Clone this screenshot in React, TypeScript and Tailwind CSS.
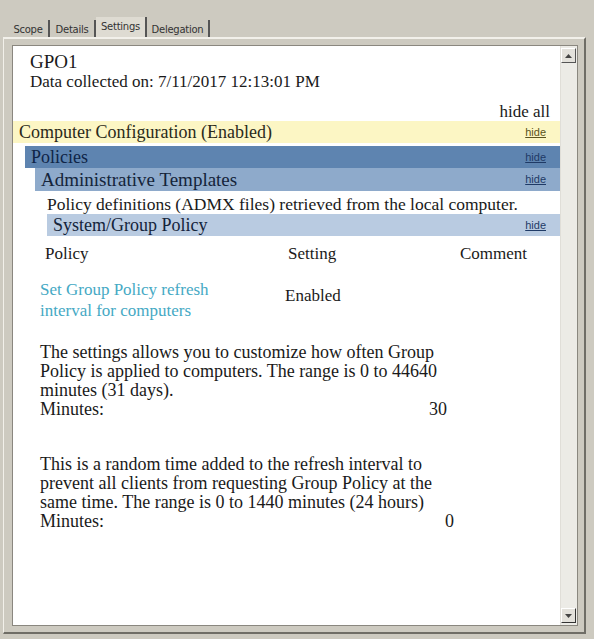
import React from 'react';

const serif = { fontFamily: '"Liberation Serif", "Times New Roman", serif' };

function HideLink({ className = '' }: { className?: string }) {
  return (
    <span
      className={`text-[11px] underline ${className}`}
      style={{ fontFamily: '"Liberation Sans", Arial, sans-serif' }}
    >
      hide
    </span>
  );
}

function SectionBar({
  title,
  size,
  bg,
  text,
}: {
  title: string;
  size: string;
  bg: string;
  text: string;
}) {
  return (
    <div className={`flex items-center justify-between pl-[6px] pr-[14px] ${size} ${bg}`}>
      <span className={`text-[18px] leading-none ${text}`}>{title}</span>
      <HideLink className="text-[#1f3a66]" />
    </div>
  );
}

export default function App() {
  const tabs = [
    { t: 'Scope', w: 'w-[42px]' },
    { t: 'Details', w: 'w-[46px]' },
    { t: 'Settings', w: 'w-[51px]' },
    { t: 'Delegation', w: 'w-[63px]' },
  ];

  return (
    <div className="w-[594px] h-[639px] bg-[#cdcac0] overflow-hidden relative">
      {/* tab strip */}
      <div className="flex items-end h-[38px] pl-[8px]">
        {tabs.map(({ t, w }) => {
          const active = t === 'Settings';
          return (
            <div
              key={t}
              className={`flex items-center justify-center ${w} border-r-2 border-[#555] text-[10px] tracking-tight text-[#333] ${
                active ? 'h-[21px] bg-[#dedbd2] pb-[3px]' : 'h-[18px]'
              }`}
              style={{ fontFamily: '"DejaVu Sans", Tahoma, sans-serif' }}
            >
              {t}
            </div>
          );
        })}
      </div>

      {/* tab panel */}
      <div className="absolute left-[3px] top-[37px] w-[583px] h-[597px] border-t-2 border-l border-[#f2f0ea] border-b-2 border-b-[#6f6d66] border-r-2 border-r-[#6f6d66] p-[6px] pl-[8px]">
        <div className="flex h-[581px] border border-[#8a877f] bg-white">
          {/* content */}
          <div className="flex-1 text-[#1a1a1a] overflow-hidden" style={serif}>
            <div className="pl-[17px] pt-[5px]">
              <div className="text-[19px] leading-[21px]">GPO1</div>
              <div className="text-[17px] leading-[20px]">Data collected on: 7/11/2017 12:13:01 PM</div>
            </div>
            <div className="text-right pr-[10px] pt-[10px] text-[17px] leading-[19px]">hide all</div>

            <div className="flex items-center justify-between h-[22px] pr-[14px] pl-[6px] bg-[#fcf6c4]">
              <span className="text-[18px] leading-none text-[#2a2a1a]">Computer Configuration (Enabled)</span>
              <HideLink className="text-[#5a5320]" />
            </div>
            <div className="pl-[12px] pt-[3px]">
              <SectionBar title="Policies" size="h-[22px]" bg="bg-[#5e84b0]" text="text-[#0f2547]" />
              <div className="pl-[10px]">
                <SectionBar
                  title="Administrative Templates"
                  size="h-[23px]"
                  bg="bg-[#8eaacb]"
                  text="text-[#14243a] text-[19px]"
                />
                <div className="pl-[12px] pt-[3px] text-[17.5px] leading-[20px] whitespace-nowrap">
                  Policy definitions (ADMX files) retrieved from the local computer.
                </div>
                <div className="pl-[12px]">
                  <SectionBar
                    title="System/Group Policy"
                    size="h-[22px]"
                    bg="bg-[#b9cbe1]"
                    text="text-[#14243a]"
                  />
                </div>
              </div>
            </div>

            {/* table */}
            <div className="grid grid-cols-[243px_172px_1fr] pl-[32px] pt-[8px] text-[17px] leading-[20px]">
              <div>Policy</div>
              <div>Setting</div>
              <div>Comment</div>
            </div>
            <div className="grid grid-cols-[245px_1fr] pl-[27px] pt-[15px] text-[17px] leading-[21px]">
              <div className="text-[#45a9c4]">
                Set Group Policy refresh
                <br />
                interval for computers
              </div>
              <div className="pt-[6px]">Enabled</div>
            </div>

            <div className="pl-[27px] pt-[22px] text-[18px] leading-[19px] w-[434px] whitespace-nowrap">
              <p>
                The settings allows you to customize how often Group
                <br />
                Policy is applied to computers. The range is 0 to 44640
                <br />
                minutes (31 days).
              </p>
              <div className="flex justify-between">
                <span>Minutes:</span>
                <span>30</span>
              </div>
            </div>

            <div className="pl-[27px] pt-[36px] text-[18px] leading-[19px] w-[441px] whitespace-nowrap">
              <p>
                This is a random time added to the refresh interval to
                <br />
                prevent all clients from requesting Group Policy at the
                <br />
                same time. The range is 0 to 1440 minutes (24 hours)
              </p>
              <div className="flex justify-between">
                <span>Minutes:</span>
                <span>0</span>
              </div>
            </div>
          </div>

          {/* scrollbar */}
          <div className="w-[17px] bg-[#ecebe6] flex flex-col justify-between py-[2px] border-l border-[#e0ded8]">
            <div className="h-[15px] w-[15px] border border-[#fff] border-r-[#555] border-b-[#555] bg-[#e3e1db] flex items-center justify-center">
              <svg width="7" height="4" viewBox="0 0 7 4">
                <path d="M0 4 L3.5 0 L7 4 Z" fill="#444" />
              </svg>
            </div>
            <div className="h-[15px] w-[15px] border border-[#fff] border-r-[#333] border-b-[#333] bg-[#e3e1db] flex items-center justify-center">
              <svg width="7" height="4" viewBox="0 0 7 4">
                <path d="M0 0 L3.5 4 L7 0 Z" fill="#444" />
              </svg>
            </div>
          </div>
        </div>
      </div>
    </div>
  );
}
